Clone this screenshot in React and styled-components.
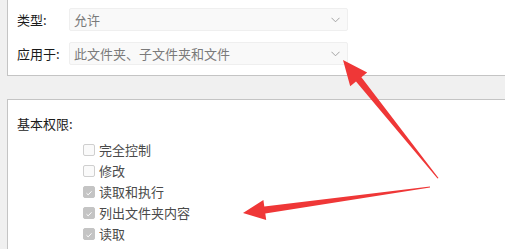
import styled, { createGlobalStyle } from "styled-components"

const GlobalStyle = createGlobalStyle`
    html, body {
        margin:0;
        padding:0;
        background:#f0f0f0;
        font-family:"Noto Sans CJK SC", "Liberation Sans", sans-serif;
    }
`;

const Chevron = () => (
    <svg width="9" height="6" viewBox="0 0 9 6">
        <path d="M0.5 0.8 L4.5 4.8 L8.5 0.8" fill="none" stroke="#9a9a9a" strokeWidth="0.9" />
    </svg>
);

const Check = ({ checked }) => (
    <Box $checked={checked}>
        {checked && (
            <svg width="12" height="12" viewBox="0 0 12 12">
                <path d="M3 6.3 L5 8.2 L9 4" fill="none" stroke="#fff" strokeWidth="1.2" />
            </svg>
        )}
    </Box>
);

const perms = [
    { label: "完全控制", checked: false },
    { label: "修改", checked: false },
    { label: "读取和执行", checked: true },
    { label: "列出文件夹内容", checked: true },
    { label: "读取", checked: true },
    { label: "写入", checked: false },
];

const App = () => {
    return <Page>
        <GlobalStyle />
        <TopPanel>
            <FieldRow>
                <Label $width="52px">类型:</Label>
                <Select>
                    <span>允许</span>
                    <Chevron />
                </Select>
            </FieldRow>
            <FieldRow>
                <Label $width="52px">应用于:</Label>
                <Select>
                    <span>此文件夹、子文件夹和文件</span>
                    <Chevron />
                </Select>
            </FieldRow>
        </TopPanel>
        <BottomPanel>
            <Label>基本权限:</Label>
            <PermList>
                {perms.map((p) => (
                    <PermRow key={p.label}>
                        <Check checked={p.checked} />
                        <span>{p.label}</span>
                    </PermRow>
                ))}
            </PermList>
        </BottomPanel>
        <Arrows width="505" height="249" viewBox="0 0 505 249">
            <polygon fill="#ef3737" points="438.5,178 361.4,77.2 367.2,72.5 343,60 350.2,86.3 356,81.6 437.5,178.5" />
            <polygon fill="#ef3737" points="430,186.5 264.3,206.5 263.4,200.1 243,213 266.2,219.9 265.3,213.5 430,187.5" />
        </Arrows>
    </Page>
};

const Page = styled.div`
    position:relative;
    width:505px;
    height:249px;
    overflow:hidden;
    padding-left:7px;
    box-sizing:border-box;
`;

const TopPanel = styled.div`
    background:#fff;
    border-left:1px solid #c4c4c4;
    border-bottom:1px solid #c4c4c4;
    height:76px;
    box-sizing:border-box;
    padding:8px 0 0 9px;
    display:flex;
    flex-direction:column;
    gap:11px;
`;

const FieldRow = styled.div`
    display:flex;
    align-items:center;
    height:23px;
`;

const Label = styled.div`
    width:${(p) => p.$width || "auto"};
    flex-shrink:0;
    white-space:nowrap;
    font-size:13px;
    line-height:18px;
    color:#1a1a1a;
`;

const Select = styled.div`
    width:279px;
    height:23px;
    box-sizing:border-box;
    background:#f9f9f9;
    border:1px solid #efefef;
    border-radius:2px;
    display:flex;
    align-items:center;
    justify-content:space-between;
    padding:0 7px 0 4px;
    font-size:13px;
    color:#7a7a7a;
`;

const BottomPanel = styled.div`
    margin-top:23px;
    background:#fff;
    border-left:1px solid #c4c4c4;
    border-top:1px solid #c4c4c4;
    padding:15px 0 0 9px;
    height:160px;
`;

const PermList = styled.div`
    display:flex;
    flex-direction:column;
    gap:8px;
    padding:10px 0 0 66px;
`;

const PermRow = styled.div`
    display:flex;
    align-items:center;
    gap:4px;
    height:13px;
    font-size:13px;
    color:#4a4a4a;
`;

const Box = styled.div`
    width:12px;
    height:12px;
    box-sizing:border-box;
    border-radius:2px;
    border:1px solid ${(p) => (p.$checked ? "#c4c4c4" : "#cfcfcf")};
    background:${(p) => (p.$checked ? "#c4c4c4" : "#fafafa")};
    display:flex;
`;

const Arrows = styled.svg`
    position:absolute;
    left:0;
    top:0;
    pointer-events:none;
`;

export default App;
